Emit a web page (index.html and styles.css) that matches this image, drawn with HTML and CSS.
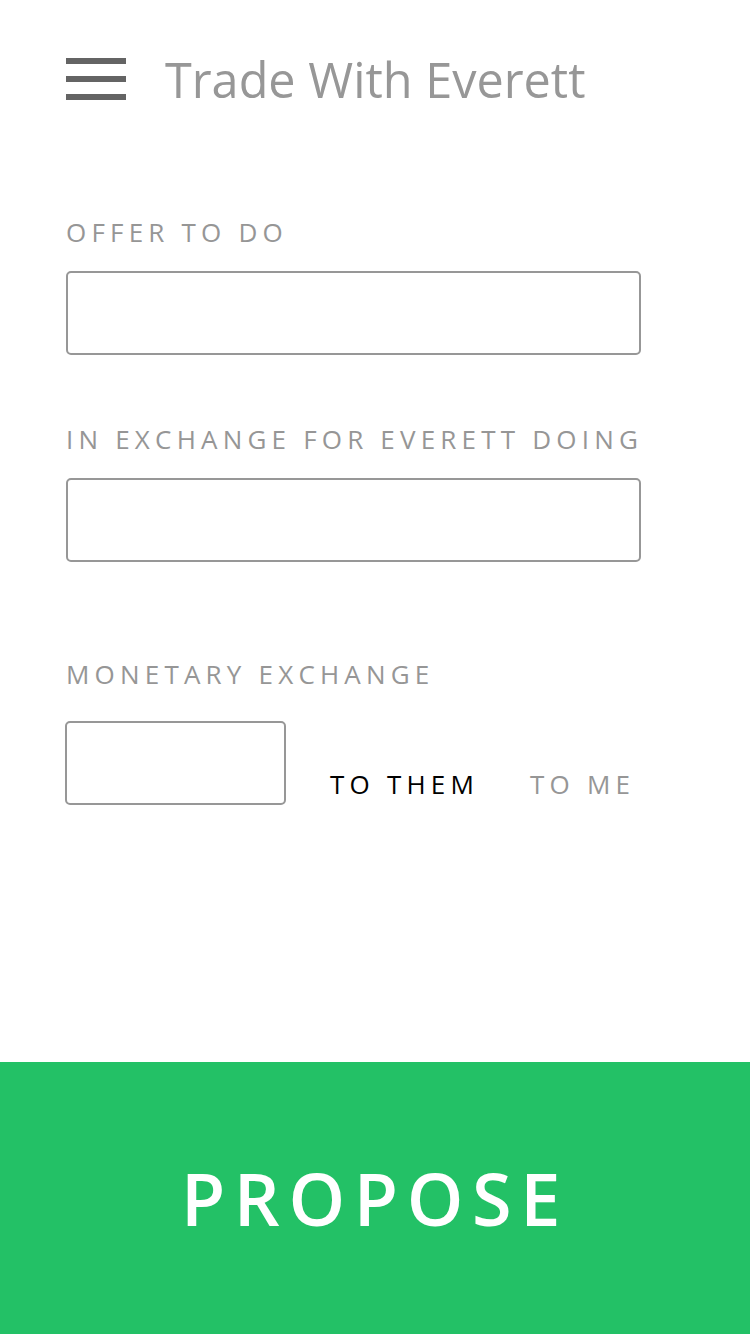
FILE: index.html
```html
<!DOCTYPE html>
<html lang="en">
<head>
    <meta charset="UTF-8">
    <meta name="viewport" content="width=device-width, initial-scale=1.0">
    <title>Trade With Everett</title>
    <link rel="stylesheet" href="styles.css">
</head>
<body>

    <div class="page">
        <div class="header">
            <div class="menuIcon">
                <span></span>
                <span></span>
                <span></span>
            </div>
            <div class="headerTitle">Trade With Everett</div>
        </div>

        <div class="form">
            <div class="field firstField">
                <div class="label">Offer to do</div>
                <input class="textInput" type="text">
            </div>
            <div class="field">
                <div class="label">In exchange for Everett doing</div>
                <input class="textInput" type="text">
            </div>
            <div class="field moneyField">
                <div class="label">Monetary exchange</div>
                <div class="moneyRow">
                    <input class="textInput moneyInput" type="text">
                    <div class="direction active">To them</div>
                    <div class="direction">To me</div>
                </div>
            </div>
        </div>

        <button class="proposeButton">Propose</button>
    </div>

</body>
</html>
```

FILE: styles.css
```css
body {
    margin: 0;
    background: #fff;
    font-family: 'Open Sans', 'Noto Sans', sans-serif;
}
.page {
    display: flex;
    flex-direction: column;
    min-height: 100vh;
}
.header {
    display: flex;
    align-items: center;
    padding: 55px 0 0 66px;
}
.menuIcon {
    display: flex;
    flex-direction: column;
    gap: 12px;
    width: 60px;
}
.menuIcon span {
    display: block;
    height: 6px;
    background: #646464;
}
.headerTitle {
    margin-left: 39px;
    font-size: 48.6px;
    line-height: 48px;
    color: #979797;
}
.form {
    flex: 1;
    padding: 0 109px 0 66px;
}
.field {
    margin-top: 66px;
}
.firstField {
    margin-top: 111px;
}
.moneyField {
    margin-top: 94px;
}
.label {
    font-size: 26px;
    line-height: 36px;
    letter-spacing: 0.2em;
    text-transform: uppercase;
    white-space: nowrap;
    color: #969696;
    margin-bottom: 21px;
}
.textInput {
    display: block;
    box-sizing: border-box;
    width: 100%;
    height: 84px;
    margin: 0;
    border: 2px solid #979797;
    border-radius: 5px;
    background: #fff;
    font-family: inherit;
    font-size: 26px;
    padding: 0 16px;
    outline: none;
}
.moneyRow {
    display: flex;
    align-items: flex-end;
    margin-top: 29px;
}
.moneyInput {
    width: 221px;
    margin-left: -1px;
}
.direction {
    margin-left: 44px;
    font-size: 26px;
    line-height: 42px;
    letter-spacing: 0.2em;
    text-transform: uppercase;
    color: #969696;
}
.direction.active {
    color: #000;
}
.direction + .direction {
    margin-left: 51px;
}
.proposeButton {
    display: block;
    width: 100%;
    height: 272px;
    border: none;
    margin: 0;
    padding: 0;
    background: #23c166;
    color: #fff;
    font-family: inherit;
    font-size: 72px;
    font-weight: 600;
    letter-spacing: 0.12em;
    text-transform: uppercase;
}
```
